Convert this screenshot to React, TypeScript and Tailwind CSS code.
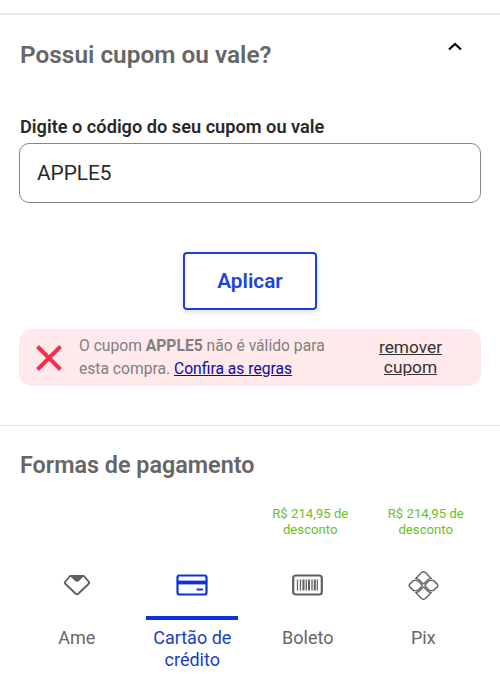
import React from 'react';

interface PaymentMethod {
  id: string;
  label: string;
  discount?: string;
  icon: React.ReactNode;
}

const AmeIcon = () => (
  <svg width="28" height="22" viewBox="0 0 28 22" fill="none" stroke="#5f5f5f" strokeWidth="1.900" strokeLinejoin="round">
    <path d="M7 2H21L26 8Q26.600 9 25.500 10L15.500 19.500Q14 20.800 12.500 19.500L2.500 10Q1.400 9 2 8Z" />
    <path d="M7 2H21L16 7Q14 8.600 12 7Z" fill="#5f5f5f" stroke="none" />
  </svg>
);

const CardIcon = () => (
  <svg width="32" height="22" viewBox="0 0 32 22" fill="none" stroke="#0f33d8">
    <rect x="1.500" y="1.500" width="29" height="19" rx="2" strokeWidth="2.200" />
    <path d="M1.500 8.500H30.500" strokeWidth="3.800" />
    <path d="M20.500 15.500H27" strokeWidth="2" />
  </svg>
);

const BarcodeIcon = () => (
  <svg width="32" height="22" viewBox="0 0 32 22" fill="none" stroke="#5f5f5f">
    <rect x="1.200" y="1.500" width="28.600" height="19" rx="2.500" strokeWidth="2.200" />
    <path d="M5.500 5.500V16.500M25.300 5.500V16.500" strokeWidth="1.200" />
    <path d="M8.500 5.500V16.500M14.300 5.500V16.500M20 5.500V16.500" strokeWidth="1.300" />
    <path d="M11.500 5.500V16.500M17 5.500V16.500M22.800 5.500V16.500" strokeWidth="2" />
  </svg>
);

const PixIcon = () => (
  <svg width="31" height="31" viewBox="0 0 32 32" fill="none" stroke="#666666" strokeWidth="1.500" strokeLinejoin="round">
    <path d="M8 8.800L14 2.600Q16 .8 18 2.600L24 8.800Q21.800 8.800 20.300 10.300L17 13.600Q16 14.600 15 13.600L11.700 10.300Q10.200 8.800 8 8.800Z" />
    <path d="M8 23.200L14 29.400Q16 31.200 18 29.400L24 23.200Q21.800 23.200 20.300 21.700L17 18.400Q16 17.400 15 18.400L11.700 21.700Q10.200 23.200 8 23.200Z" />
    <path d="M5.800 10.700H8.500Q9.800 10.700 10.800 11.700L14 15Q15 16 14 17L10.800 20.300Q9.800 21.300 8.500 21.300H5.800L1.800 17.400Q.5 16 1.800 14.600Z" />
    <path d="M26.200 10.700H23.500Q22.200 10.700 21.200 11.700L18 15Q17 16 18 17L21.200 20.300Q22.200 21.300 23.500 21.300H26.200L30.200 17.400Q31.500 16 30.200 14.600Z" />
  </svg>
);

const methods: PaymentMethod[] = [
  { id: 'ame', label: 'Ame', icon: <AmeIcon /> },
  { id: 'card', label: 'Cartão de crédito', icon: <CardIcon /> },
  { id: 'boleto', label: 'Boleto', discount: 'R$ 214,95 de desconto', icon: <BarcodeIcon /> },
  { id: 'pix', label: 'Pix', discount: 'R$ 214,95 de desconto', icon: <PixIcon /> },
];

const CouponSection = () => (
  <section className="h-[412px] border-t-2 border-[#ebebeb] px-[19px] pt-[24px]">
    <div className="flex items-start justify-between pr-[18px]">
      <h2 className="pl-px text-[24.400px] leading-[32px] font-semibold text-[#666666]">Possui cupom ou vale?</h2>
      <button type="button" aria-label="Recolher" className="mt-[2px]">
        <svg width="16" height="12" viewBox="0 0 16 12" fill="none" stroke="#000" strokeWidth="2.200">
          <path d="M2 8.500L8 3L14 8.500" />
        </svg>
      </button>
    </div>
    <label htmlFor="coupon" className="mt-[44px] block pl-px text-[18.200px] leading-[24px] font-semibold text-[#282828]">
      Digite o código do seu cupom ou vale
    </label>
    <input
      id="coupon"
      defaultValue="APPLE5"
      className="mt-[4px] block h-[60px] w-[462px] rounded-[10px] border border-[#888888] px-[17px] text-[20.800px] text-[#282828] outline-none"
    />
    <button
      type="button"
      className="mx-auto mt-[49px] block h-[58px] w-[134px] rounded-[4px] border-2 border-[#1d3fd2] pt-[2px] text-[20.800px] font-semibold text-[#1f43dc] shadow-[0_2px_5px_rgba(0,0,0,0.15)]"
    >
      Aplicar
    </button>
    <div className="mt-[19px] flex h-[57px] items-center rounded-[13px] bg-[#ffe9eb] pl-[17px]">
      <svg width="26" height="26" viewBox="0 0 26 26" stroke="#f5304f" strokeWidth="4">
        <path d="M1.500 1.500L24.500 24.500M24.500 1.500L1.500 24.500" />
      </svg>
      <p className="mb-[2px] ml-[17px] w-[270px] text-[15.650px] leading-[23px] text-[#808080]">
        O cupom <strong className="font-bold">APPLE5</strong> não é válido para<br />
        esta compra.{' '}
        <a href="#regras" className="text-[#1008a8] underline">Confira as regras</a>
      </p>
      <button type="button" className="mb-[2px] ml-[14px] w-[95px] text-[17.300px] leading-[20px] text-[#333333] underline">
        remover cupom
      </button>
    </div>
  </section>
);

const PaymentTab = ({ method, active }: { method: PaymentMethod; active: boolean }) => (
  <button type="button" className="flex flex-col items-center">
    <span className="h-[32px] w-[94px] translate-x-[2.500px] text-[13.200px] leading-[15.500px] text-[#6cc024]">{method.discount}</span>
    <span className="mt-[31px] flex h-[32px] items-center">{method.icon}</span>
    <span className={active ? 'mt-[15px] h-[4px] w-[92px] bg-[#0c32dc]' : 'mt-[15px] h-[4px] w-[92px]'} />
    <span className={`mt-[7px] w-[92px] text-[18px] leading-[22px] ${active ? 'text-[#1a3ebd]' : 'text-[#666666]'}`}>{method.label}</span>
  </button>
);

export default function App() {
  return (
    <main className="h-[696px] w-[500px] overflow-hidden bg-white pt-[13px] font-['Roboto',sans-serif]">
      <CouponSection />
      <section className="border-t border-[#e6e6e6] px-[19px] pt-[23px]">
        <h2 className="pl-px text-[23.350px] leading-[32px] font-semibold text-[#666666]">Formas de pagamento</h2>
        <div className="mt-[25px] grid grid-cols-4 items-start">
          {methods.map((method) => (
            <PaymentTab key={method.id} method={method} active={method.id === 'card'} />
          ))}
        </div>
      </section>
    </main>
  );
}
